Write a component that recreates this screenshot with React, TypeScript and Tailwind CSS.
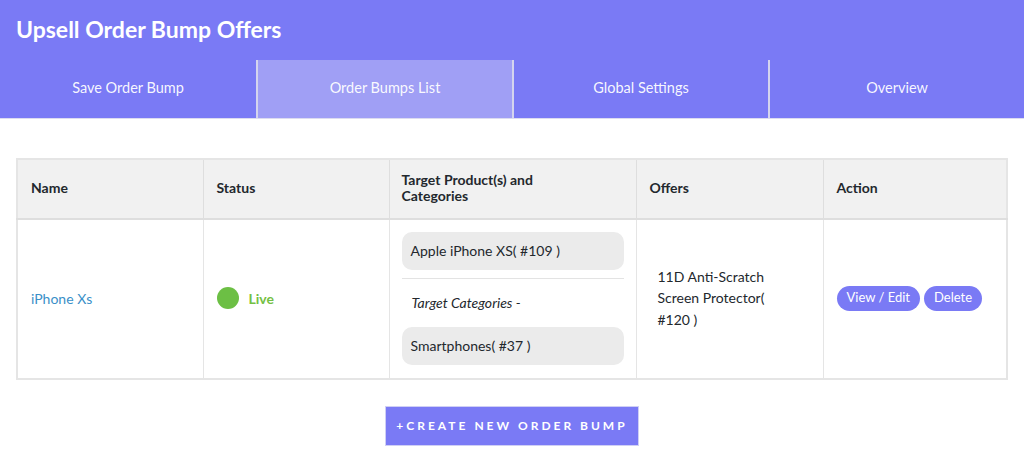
import React from "react";

const tabs = ["Save Order Bump", "Order Bumps List", "Global Settings", "Overview"];

const font = { fontFamily: "Lato, 'Noto Sans', sans-serif" };

export default function App() {
  return (
    <div className="min-h-[470px] bg-white text-[#23282d]" style={font}>
      <header className="bg-[#7a7af5] border-b border-[#dcdcf0]">
        <h1 className="px-4 pt-[13px] pb-0 h-[60px] text-[23px] font-bold text-white leading-[32px]">
          Upsell Order Bump Offers
        </h1>
        <nav className="grid grid-cols-4 h-[58px]">
          {tabs.map((t, i) => (
            <div
              key={t}
              className={`flex items-center justify-center pb-[2px] text-[14.5px] text-white/95 ${
                i === 1 ? "bg-[#a09ff5]" : ""
              } ${i > 0 ? "border-l-2 border-[#d4d4ee]" : ""}`}
            >
              {t}
            </div>
          ))}
        </nav>
      </header>

      <main className="px-4 pt-[39px]">
        <table className="w-full border-collapse border-2 border-[#e5e5e5] text-[14px]">
          <thead>
            <tr className="bg-[#f1f1f1] h-[60px] text-left">
              <th className="w-[186px] px-[13px] pb-[3px] font-bold border-r border-b-2 border-[#dedede]">Name</th>
              <th className="w-[186px] px-[13px] pb-[3px] font-bold border-r border-b-2 border-[#dedede]">Status</th>
              <th className="w-[247px] px-[12px] pb-[3px] font-bold leading-[16px] border-r border-b-2 border-[#dedede]">
                Target Product(s) and
                <br />
                Categories
              </th>
              <th className="w-[187px] px-[13px] pb-[3px] font-bold border-r border-b-2 border-[#dedede]">Offers</th>
              <th className="px-[13px] pb-[3px] font-bold border-b-2 border-[#dedede]">Action</th>
            </tr>
          </thead>
          <tbody>
            <tr className="h-[160px]">
              <td className="px-[13px] pb-[2px] border-r border-[#e5e5e5] text-[#3a8fc8]">iPhone Xs</td>
              <td className="px-[13px] pb-[2px] border-r border-[#e5e5e5]">
                <div className="flex items-center gap-[10px]">
                  <span className="w-[22px] h-[22px] rounded-full bg-[#6cbf44]" />
                  <span className="font-bold text-[#74c043]">Live</span>
                </div>
              </td>
              <td className="px-[12px] pb-[2px] border-r border-[#e5e5e5]">
                <div className="flex flex-col">
                  <div className="h-[38px] rounded-[10px] bg-[#ebebeb] px-[9px] flex items-center">
                    Apple iPhone XS( #109 )
                  </div>
                  <div className="h-px bg-[#e3e3e3] mt-[8px]" />
                  <div className="italic px-[10px] h-[48px] flex items-center">Target Categories -</div>
                  <div className="h-[38px] rounded-[10px] bg-[#ebebeb] px-[9px] flex items-center">
                    Smartphones( #37 )
                  </div>
                </div>
              </td>
              <td className="pl-[21px] pr-[14px] pb-[2px] border-r border-[#e5e5e5] leading-[21.5px]">
                11D Anti-Scratch
                <br />
                Screen Protector(
                <br />
                #120 )
              </td>
              <td className="px-[13px] pb-[2px]">
                <div className="flex items-center gap-[4px]">
                  <button className="h-[25px] px-[10px] rounded-full bg-[#7a7af5] text-white text-[13px]">
                    View / Edit
                  </button>
                  <button className="h-[25px] px-[10px] rounded-full bg-[#7a7af5] text-white text-[13px]">
                    Delete
                  </button>
                </div>
              </td>
            </tr>
          </tbody>
        </table>

        <div className="flex justify-center mt-[26px]">
          <button className="w-[254px] h-[40px] bg-[#7a7af5] text-white text-[12px] font-bold uppercase tracking-[0.25em] border border-[#cfcff5]">
            +Create New Order Bump
          </button>
        </div>
      </main>
    </div>
  );
}
